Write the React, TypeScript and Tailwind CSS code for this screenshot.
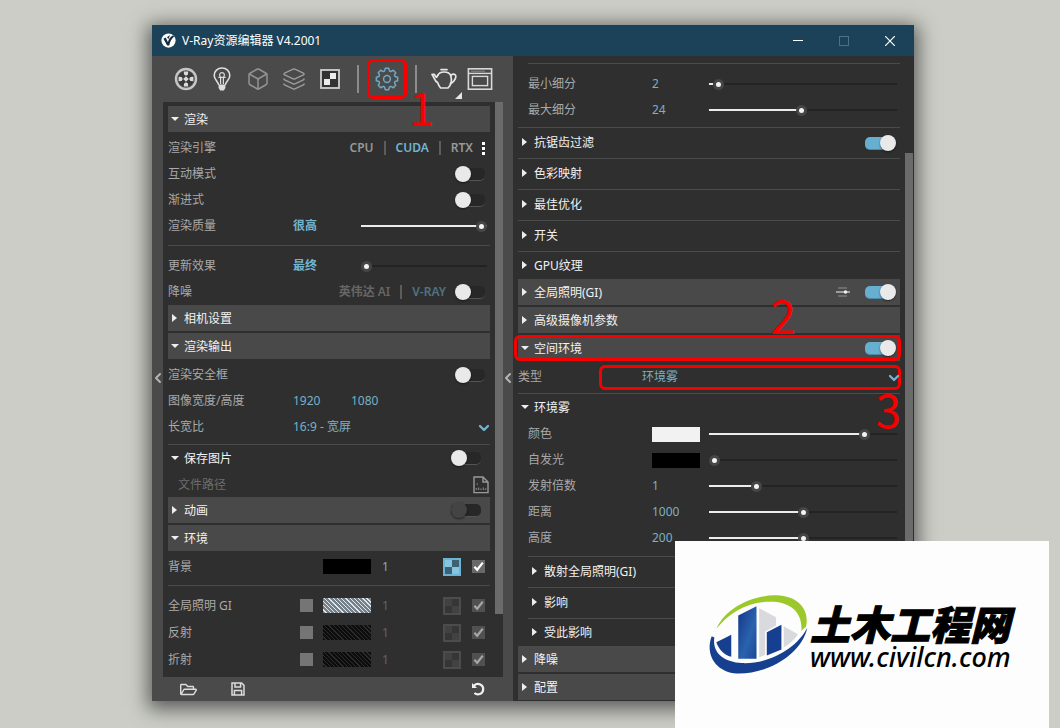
import React from 'react'
import { Box, ChevronDown, ChevronLeft, Layers } from 'lucide-react'
import { FaRegFolderOpen } from 'react-icons/fa'

/* ---------- icons ---------- */

const VrayLogo = () => (
  <svg viewBox="0 0 16 16" className="size-[15px]" aria-hidden="true">
    <circle cx="8" cy="8" r="7.6" fill="#fff" />
    <path d="M2.6 6 L5 4.8 L7.4 9.8 C8.2 6.4 10 3.8 13 2.4 L14 3.8 C11.2 6 9.8 9 8.8 13.2 L6.6 13.2 Z" fill="#14293a" />
    <path d="M6.4 4.4 L9.6 2 L8 6.4 Z" fill="#14293a" />
  </svg>
)

const MaterialIcon = () => (
  <svg viewBox="0 0 24 24" className="size-6" fill="none" aria-hidden="true">
    <circle cx="12" cy="12" r="10" stroke="#c6c6c6" strokeWidth="2.4" />
    <circle cx="12" cy="12" r="7.8" fill="#3a3a3a" />
    <path
      d="M12 9.2 L14.8 12 L12 14.8 L9.2 12 Z M9.8 4.6 H14.2 L14 7.6 L12 8.8 L10 7.6 Z M9.8 19.4 H14.2 L14 16.4 L12 15.2 L10 16.4 Z M4.6 9.8 V14.2 L7.6 14 L8.8 12 L7.6 10 Z M19.4 9.8 V14.2 L16.4 14 L15.2 12 L16.4 10 Z"
      fill="#dadada"
    />
  </svg>
)

const LightIcon = () => (
  <svg viewBox="0 0 24 24" className="size-6" fill="none" stroke="#dedede" strokeWidth="1.6" aria-hidden="true">
    <path d="M8.6 18 C8.6 14.5 4.2 13 4.2 8.4 C4.2 4 7.6 1 12 1 C16.4 1 19.8 4 19.8 8.4 C19.8 13 15.4 14.5 15.4 18" />
    <path d="M8.6 17.4 H15.4 V21 L13.8 23.4 H10.2 L8.6 21 Z" fill="#dedede" stroke="none" />
    <path d="M8.4 10.4 H15.6 M10.4 10 C8.8 7.6 9.8 5.6 12 5.6 C14.2 5.6 15.2 7.6 13.6 10 M10.6 10.4 V17 M13.4 10.4 V17" strokeWidth="1.2" />
  </svg>
)

const TextureIcon = () => (
  <svg viewBox="0 0 24 24" className="size-6" aria-hidden="true">
    <rect x="3" y="3" width="18" height="18" fill="#333" stroke="#cfcfcf" strokeWidth="1.8" />
    <path d="M12 6 H18 V12 H12 Z M6 12 H12 V18 H6 Z" fill="#ececec" />
  </svg>
)

const GEAR_TEETH = 8

const gearPath = () => {
  const step = (Math.PI * 2) / GEAR_TEETH
  const points: string[] = []
  for (let i = 0; i < GEAR_TEETH; i++) {
    const a = i * step - Math.PI / 2
    const corners = [
      [8.4, -0.3],
      [10.8, -0.16],
      [10.8, 0.16],
      [8.4, 0.3],
    ]
    corners.forEach(([r, d]) => {
      points.push(`${(12 + r * Math.cos(a + d)).toFixed(2)} ${(12 + r * Math.sin(a + d)).toFixed(2)}`)
    })
  }
  return `M${points.join(' L')} Z`
}

const GearIcon = () => (
  <svg viewBox="0 0 24 24" className="size-6" fill="none" stroke="#6fa8c4" strokeWidth="1.5" strokeLinejoin="round" aria-hidden="true">
    <path d={gearPath()} />
    <circle cx="12" cy="12" r="3.4" />
  </svg>
)

const TeapotIcon = () => (
  <svg viewBox="0 0 28 24" className="h-6 w-7" fill="none" stroke="#e6e6e6" strokeWidth="1.7" strokeLinejoin="round" strokeLinecap="round" aria-hidden="true">
    <path d="M11 2.6 H17" />
    <path d="M8 8 C9 5.8 11 5 14 5 C17 5 19.4 5.8 20.6 8" />
    <path d="M8 8 C6.6 9.6 7 11 6 10 L4.4 7.4 L2 7.4 C4 9.6 4.6 14.4 7.6 15.6 C8.4 18 9.4 19.6 10.6 21 H18 C20.6 18.6 22.4 14 20.6 8" />
    <path d="M20.8 8.4 C24.6 5.6 26.6 8.4 25.6 11 C24.8 13.4 22.8 15.4 20.4 16.6" />
  </svg>
)

const FrameIcon = () => (
  <svg viewBox="0 0 26 24" className="h-6 w-[26px]" fill="none" stroke="#d8d8d8" aria-hidden="true">
    <rect x="1.4" y="1.8" width="23.2" height="20.4" strokeWidth="1.6" />
    <path d="M2 6.4 H24" strokeWidth="1.4" />
    <path d="M4 4.2 H18" strokeWidth="1" stroke="#8c8c8c" />
    <rect x="5.4" y="9.4" width="15.2" height="9.2" strokeWidth="1.4" />
  </svg>
)

const FileIcon = () => (
  <svg viewBox="0 0 16 18" className="h-[18px] w-4" fill="none" stroke="#9a9a9a" strokeWidth="1.4" aria-hidden="true">
    <path d="M1 1 H10 L15 6 V16.6 H1 Z M10 1 V6 H15" />
    <path d="M3.4 14 V12 M5.6 14 V11.4 M8 14 V12.4 M10.4 14 V11.6 M12.6 14 V12.2 M3.6 8 H5" stroke="#777" />
  </svg>
)

const SaveIcon = () => (
  <svg viewBox="0 0 16 16" className="size-4" fill="none" stroke="#dcdcdc" strokeWidth="1.5" aria-hidden="true">
    <path d="M2 2 H11.6 L14 4.4 V14 H2 Z" />
    <path d="M5 2 V6 H10.6 V2 M4.4 14 V9.4 H11.6 V14" />
  </svg>
)

const ResetIcon = () => (
  <svg viewBox="0 0 16 16" className="size-4" fill="none" stroke="#f0f0f0" strokeWidth="2.2" aria-hidden="true">
    <path d="M4 4.6 C8 1 13.6 3.8 13.2 8.6 C12.8 13 7.6 14.8 4.4 12" />
    <path d="M2 2 V7 H7 Z" fill="#f0f0f0" stroke="none" />
  </svg>
)

const TuneIcon = () => (
  <svg viewBox="0 0 16 12" className="h-3 w-4" stroke="#8f8f8f" strokeWidth="1.2" aria-hidden="true">
    <path d="M3 2 H12 M3 10 H12" />
    <path d="M1 6 H15" stroke="#d8d8d8" />
    <circle cx="10.5" cy="6" r="1.8" fill="#f0f0f0" stroke="none" />
  </svg>
)

const Arrow = ({ open }: { open?: boolean }) => (
  <svg viewBox="0 0 12 12" className="h-3 w-3 shrink-0 overflow-visible" fill="#ededed" aria-hidden="true">
    {open ? <path d="M-1 3 H7 L3 7 Z" /> : <path d="M0 1 L5 5 L0 9 Z" />}
  </svg>
)

/* ---------- controls ---------- */

type ToggleProps = { id?: string; label: string; on?: boolean; dim?: boolean }

const Toggle: React.FC<ToggleProps> = ({ id, label, on, dim }) => (
  <input
    id={id}
    type="checkbox"
    aria-label={label}
    defaultChecked={on}
    disabled={dim}
    className="relative h-[13px] w-[30px] shrink-0 appearance-none rounded-[5px] border-b border-[#555] bg-[#272727] before:absolute before:-top-[2px] before:left-0 before:size-4 before:rounded-full before:bg-[#e9e9e9] before:shadow-[0_1px_2px_rgba(0,0,0,0.5)] checked:border-[#4c8aa5] checked:bg-[#66afd0] checked:before:left-[15px] disabled:before:bg-[#444]"
  />
)

const Slider = ({ id, label, value }: { id?: string; label: string; value: number }) => (
  <input
    id={id}
    type="range"
    aria-label={label}
    defaultValue={value}
    style={{ backgroundImage: `linear-gradient(to right, #ececec ${value}%, #232323 ${value}%)` }}
    className="mr-[3px] h-[2px] min-w-0 flex-1 appearance-none [&::-webkit-slider-thumb]:size-[11px] [&::-webkit-slider-thumb]:appearance-none [&::-webkit-slider-thumb]:rounded-full [&::-webkit-slider-thumb]:border-[3px] [&::-webkit-slider-thumb]:border-[#464646] [&::-webkit-slider-thumb]:bg-[#f4f4f4]"
  />
)

type SectionProps = { title: string; open?: boolean; children?: React.ReactNode }

const Bar: React.FC<SectionProps> = ({ title, open, children }) => (
  <div className="relative flex h-[26px] items-center bg-[#494949]">
    <button type="button" aria-expanded={!!open} className="flex flex-1 items-center pt-[2px] pl-1 text-left text-[#f2f2f2]">
      <Arrow open={open} />
      {title}
    </button>
    {children}
  </div>
)

const Line: React.FC<SectionProps & { short?: boolean }> = ({ title, open, short, children }) => (
  <div className={short ? 'flex h-[28px] items-center border-t border-[#4a4c4b]' : 'flex h-[31px] items-center border-t border-[#4a4c4b]'}>
    <button type="button" aria-expanded={!!open} className="flex flex-1 items-center pl-1 text-left text-[#f2f2f2]">
      <Arrow open={open} />
      {title}
    </button>
    {children}
  </div>
)

const Row = ({ id, label, children }: { id: string; label: string; children: React.ReactNode }) => (
  <div className="flex h-[26px] items-center">
    <label htmlFor={id} className="w-[125px] shrink-0">
      {label}
    </label>
    {children}
  </div>
)

const ParamRow = ({ id, label, value, color, slider }: { id: string; label: string; value?: string; color?: 'white' | 'black'; slider: number }) => (
  <div className="flex h-[26px] items-center pl-[10px]">
    <label htmlFor={id} className="w-[124px] shrink-0">
      {label}
    </label>
    <div className="flex w-[57px] shrink-0">
      {color ? (
        <button
          id={id}
          type="button"
          aria-label={label}
          className={color === 'white' ? 'h-[15px] w-12 bg-[#f2f2f2]' : 'h-[15px] w-12 bg-black'}
        />
      ) : (
        <input id={id} type="text" defaultValue={value} className="w-12 bg-transparent text-[#7ab0c6]" />
      )}
    </div>
    <Slider label={label + '滑块'} value={slider} />
  </div>
)

type EnvRowProps = { id: string; label: string; fill: 'black' | 'light' | 'dark'; active?: boolean }

const swatchFill = {
  black: 'h-[15px] w-12 shrink-0 bg-black',
  light: 'h-[15px] w-12 shrink-0 bg-[repeating-linear-gradient(45deg,#75818a_0px,#75818a_2px,#e2e6e8_2px,#e2e6e8_3px)]',
  dark: 'h-[15px] w-12 shrink-0 bg-[repeating-linear-gradient(45deg,#0d0d0d_0px,#0d0d0d_2px,#2c2c2c_2px,#2c2c2c_3px)]',
}

const EnvRow: React.FC<EnvRowProps> = ({ id, label, fill, active }) => (
  <div className="flex h-[27px] shrink-0 items-center">
    <label htmlFor={id} className="min-w-0 flex-1">
      {label}
    </label>
    {!active && <input type="checkbox" aria-label={label + '覆盖'} className="mr-[10px] size-[13px] shrink-0 appearance-none bg-[#757575]" />}
    <button type="button" aria-label={label + '颜色'} className={swatchFill[fill]} />
    <input
      id={id}
      type="text"
      defaultValue="1"
      className={active ? 'ml-[11px] w-[61px] bg-transparent text-[#7ab0c6]' : 'ml-[11px] w-[61px] bg-transparent text-[#5d6468]'}
    />
    <button type="button" aria-label={label + '贴图'} className="shrink-0">
      <svg viewBox="0 0 18 18" className="size-[18px]" aria-hidden="true">
        <rect width="18" height="18" fill={active ? '#6db3d2' : '#4c4c4c'} />
        <path d="M2 2 H9 V9 H2 Z M9 9 H16 V16 H9 Z" fill={active ? '#84c6e2' : '#424242'} />
        <path d="M9 2 H16 V9 H9 Z M2 9 H9 V16 H2 Z" fill={active ? '#3f6272' : '#363636'} />
      </svg>
    </button>
    <span className="relative mr-[5px] ml-[11px] flex size-[13px] shrink-0">
      <input
        type="checkbox"
        aria-label={label + '启用'}
        defaultChecked
        className={active ? 'size-[13px] appearance-none bg-[#696969]' : 'size-[13px] appearance-none bg-[#505050]'}
      />
      <svg viewBox="0 0 13 13" className="pointer-events-none absolute inset-0" fill="none" stroke={active ? '#fff' : '#a6a6a6'} strokeWidth="2.2" aria-hidden="true">
        <path d="M2.4 6.8 L5.2 9.8 L10.8 2.6" />
      </svg>
    </span>
  </div>
)

const Collapse = ({ label }: { label: string }) => (
  <button type="button" aria-label={label} className="flex items-center justify-center pb-6 text-[#b4b4b4]">
    <ChevronLeft className="size-4 shrink-0" strokeWidth={3} />
  </button>
)

const ToolButton = ({ label, children }: { label: string; children: React.ReactNode }) => (
  <button type="button" aria-label={label} className="relative flex h-10 w-9 shrink-0 items-center justify-center">
    {children}
  </button>
)

const Separator = () => <span className="h-[14px] w-[2px] bg-[#5c5c5c]" />

/* ---------- layout ---------- */

const TitleBar = () => (
  <header className="flex h-[31px] items-center bg-[#1b4259] pl-[9px] text-white">
    <VrayLogo />
    <h1 className="ml-[6px] flex-1">V-Ray资源编辑器 V4.2001</h1>
    <button type="button" aria-label="最小化" className="flex h-full w-[46px] items-center justify-center">
      <span className="h-px w-[10px] bg-white" />
    </button>
    <button type="button" aria-label="最大化" disabled className="flex h-full w-[45px] items-center justify-center">
      <span className="size-[10px] border border-[#4f7186]" />
    </button>
    <button type="button" aria-label="关闭" className="flex h-full w-12 items-center justify-center">
      <svg viewBox="0 0 10 10" className="size-[10px]" stroke="#fff" strokeWidth="1.2" aria-hidden="true">
        <path d="M0 0 L10 10 M10 0 L0 10" />
      </svg>
    </button>
  </header>
)

const Toolbar = () => (
  <nav className="flex h-[46px] shrink-0 items-center pl-4">
    <ToolButton label="材质">
      <MaterialIcon />
    </ToolButton>
    <ToolButton label="灯光">
      <LightIcon />
    </ToolButton>
    <ToolButton label="几何体">
      <Box className="size-6 text-[#939393]" strokeWidth={1.5} />
    </ToolButton>
    <ToolButton label="渲染元素">
      <Layers className="size-6 text-[#9b9b9b]" strokeWidth={1.5} />
    </ToolButton>
    <ToolButton label="纹理">
      <TextureIcon />
    </ToolButton>
    <span className="ml-[9px] h-7 w-[2px] bg-[#8c8c8c]" />
    <div className="relative mx-2 flex">
      <button type="button" aria-label="设置" className="flex size-10 items-center justify-center rounded-md border-[3px] border-[#f60000]">
        <GearIcon />
      </button>
      <span className="absolute top-6 left-[42px] z-10 font-['Noto_Sans_CJK_SC',sans-serif] text-[46px] leading-[46px] text-[#f60000]">1</span>
    </div>
    <span className="mr-[9px] h-7 w-[2px] bg-[#8c8c8c]" />
    <ToolButton label="渲染">
      <TeapotIcon />
      <svg viewBox="0 0 7 7" className="absolute right-0 bottom-0 size-[7px]" fill="#e6e6e6" aria-hidden="true">
        <path d="M7 0 V7 H0 Z" />
      </svg>
    </ToolButton>
    <ToolButton label="帧缓冲">
      <FrameIcon />
    </ToolButton>
  </nav>
)

const LeftSettings = () => (
  <div className="flex min-h-0 flex-1 overflow-hidden bg-[#2f2f2f] pt-1 pl-[5px]">
    <div className="flex min-w-0 flex-1 flex-col">
      <Bar title="渲染" open />
      <section className="pt-[3px]">
        <div className="flex h-[26px] items-center">
          <span className="flex-1">渲染引擎</span>
          <div className="flex items-center gap-[10px] font-semibold text-[#989898]">
            <button type="button">CPU</button>
            <Separator />
            <button type="button" className="text-[#72b5d0]">
              CUDA
            </button>
            <Separator />
            <button type="button">RTX</button>
          </div>
          <button type="button" aria-label="更多" className="mr-[5px] ml-[9px] flex flex-col gap-[2px]">
            <span className="size-[3px] bg-white" />
            <span className="size-[3px] bg-white" />
            <span className="size-[3px] bg-white" />
          </button>
        </div>
        <Row id="interactive" label="互动模式">
          <span className="flex-1" />
          <span className="mr-[5px] flex">
            <Toggle id="interactive" label="互动模式" />
          </span>
        </Row>
        <Row id="progressive" label="渐进式">
          <span className="flex-1" />
          <span className="mr-[5px] flex">
            <Toggle id="progressive" label="渐进式" />
          </span>
        </Row>
        <Row id="quality" label="渲染质量">
          <span className="w-[68px] shrink-0 font-bold text-[#72b5d0]">很高</span>
          <Slider id="quality" label="渲染质量" value={100} />
        </Row>
        <hr className="mt-[6px] mb-[7px] border-[#4a4a4a]" />
        <Row id="update" label="更新效果">
          <span className="w-[68px] shrink-0 font-bold text-[#72b5d0]">最终</span>
          <Slider id="update" label="更新效果" value={0} />
        </Row>
        <Row id="denoise" label="降噪">
          <div className="flex flex-1 items-center justify-end gap-[10px] font-semibold text-[#666]">
            <button type="button">英伟达 AI</button>
            <Separator />
            <button type="button" className="text-[#4f7382]">
              V-RAY
            </button>
          </div>
          <span className="mr-[5px] ml-[9px] flex">
            <Toggle id="denoise" label="降噪" />
          </span>
        </Row>
      </section>

      <div className="flex flex-col gap-[2px]">
        <Bar title="相机设置" />
        <Bar title="渲染输出" open />
      </div>
      <section className="pt-[3px]">
        <Row id="safe" label="渲染安全框">
          <span className="flex-1" />
          <span className="mr-[5px] flex">
            <Toggle id="safe" label="渲染安全框" />
          </span>
        </Row>
        <Row id="width" label="图像宽度/高度">
          <input id="width" type="text" defaultValue="1920" className="w-[58px] bg-transparent text-[#7ab0c6]" />
          <input type="text" aria-label="高度" defaultValue="1080" className="w-[58px] bg-transparent text-[#7ab0c6]" />
        </Row>
        <Row id="ratio" label="长宽比">
          <div className="relative flex flex-1">
            <select id="ratio" className="w-full appearance-none bg-transparent text-[#7ab0c6]">
              <option>16:9 - 宽屏</option>
            </select>
            <ChevronDown className="pointer-events-none absolute top-0.5 -right-0.5 size-4 text-[#72b5d0]" strokeWidth={3.5} />
          </div>
        </Row>
      </section>
      <div className="pt-1">
        <Line title="保存图片" open short>
          <span className="mr-[9px] flex">
            <Toggle label="保存图片" />
          </span>
        </Line>
      </div>
      <div className="flex h-[25px] items-center pl-[10px]">
        <span className="flex-1 text-[#6c6c6c]">文件路径</span>
        <button type="button" aria-label="选择文件" className="mr-px">
          <FileIcon />
        </button>
      </div>

      <div className="flex flex-col gap-[2px]">
        <Bar title="动画">
          <span className="mr-[9px] flex">
            <Toggle label="动画" dim />
          </span>
        </Bar>
        <Bar title="环境" open />
      </div>
      <section className="pt-[2px]">
        <EnvRow id="background" label="背景" fill="black" active />
        <hr className="mt-[5px] mb-[6px] border-[#4a4a4a]" />
        <EnvRow id="gi" label="全局照明 GI" fill="light" />
        <EnvRow id="reflect" label="反射" fill="dark" />
        <EnvRow id="refract" label="折射" fill="dark" />
      </section>
    </div>
    <div className="-mt-1 ml-[5px] w-2">
      <div className="h-[89%] bg-[#6b6b6b]" />
    </div>
  </div>
)

const RightSettings = () => (
  <div className="flex bg-[#2f2f2f] pr-px pl-[5px]">
    <div className="min-w-0 flex-1 pb-px">
      <section className="pt-[7px] pb-1">
        <hr className="mb-[7px] ml-[10px] border-[#4a4c4b]" />
        <ParamRow id="min" label="最小细分" value="2" slider={2} />
        <ParamRow id="max" label="最大细分" value="24" slider={49} />
      </section>
      <Line title="抗锯齿过滤">
        <span className="mr-[5px] flex">
          <Toggle label="抗锯齿过滤" on />
        </span>
      </Line>
      <Line title="色彩映射" />
      <Line title="最佳优化" />
      <Line title="开关" />
      <Line title="GPU纹理" short />
      <div className="flex flex-col gap-[2px]">
        <Bar title="全局照明(GI)">
          <button type="button" aria-label="全局照明选项" className="mr-[14px]">
            <TuneIcon />
          </button>
          <span className="mr-[5px] flex">
            <Toggle label="全局照明" on />
          </span>
        </Bar>
        <Bar title="高级摄像机参数" />
        <Bar title="空间环境" open>
          <span className="mr-[5px] flex">
            <Toggle label="空间环境" on />
          </span>
          <span className="pointer-events-none absolute inset-y-0 -right-px -left-1 rounded-md border-[3px] border-[#f60000]" />
          <span className="pointer-events-none absolute right-[104px] bottom-6 font-['Noto_Sans_CJK_SC',sans-serif] text-[46px] leading-[46px] text-[#f60000]">2</span>
        </Bar>
      </div>

      <div className="relative -mr-px flex h-8 items-center">
        <label htmlFor="type" className="w-[81px] shrink-0">
          类型
        </label>
        <div className="relative flex h-[25px] flex-1 items-center rounded-md border-[3px] border-[#f60000]">
          <select id="type" className="w-full appearance-none bg-transparent pl-10 text-[#7ab0c6]">
            <option>环境雾</option>
          </select>
          <ChevronDown className="pointer-events-none absolute top-0.5 -right-1 size-4 text-[#72b5d0]" strokeWidth={3.5} />
        </div>
        <span className="pointer-events-none absolute top-6 right-0 font-['Noto_Sans_CJK_SC',sans-serif] text-[46px] leading-[46px] text-[#f60000]">3</span>
      </div>

      <Line title="环境雾" open short />
      <section className="pb-[5px]">
        <ParamRow id="color" label="颜色" color="white" slider={85} />
        <ParamRow id="emission" label="自发光" color="black" slider={0} />
        <ParamRow id="multiplier" label="发射倍数" value="1" slider={24} />
        <ParamRow id="distance" label="距离" value="1000" slider={50} />
        <ParamRow id="height" label="高度" value="200" slider={50} />
      </section>
      <div className="pl-[10px]">
        <Line title="散射全局照明(GI)" />
        <Line title="影响" />
        <Line title="受此影响" short />
      </div>
      <div className="flex flex-col gap-[2px]">
        <Bar title="降噪" />
        <Bar title="配置" />
      </div>
    </div>
    <div className="ml-[5px] flex w-2 pt-[97px]">
      <div className="flex-1 bg-[#6b6b6b]" />
    </div>
  </div>
)

const SiteBadge = () => (
  <aside className="absolute right-[11px] bottom-0 flex h-[187px] w-[374px] items-center bg-[#fdfdfd] pl-8 text-black">
    <svg viewBox="110 170 310 250" className="h-[83px] w-[103px] shrink-0" role="img" aria-label="土木工程网">
      <defs>
        <linearGradient id="tower" x1="0" y1="0" x2="1" y2="1">
          <stop offset="0%" stopColor="#12358a" />
          <stop offset="60%" stopColor="#2a63ad" />
          <stop offset="100%" stopColor="#1b4597" />
        </linearGradient>
      </defs>
      <path d="M138 278 C165 215 250 175 320 177 C385 180 420 220 408 272 L394 284 C398 240 375 205 320 197 C240 190 180 225 138 278 Z" fill="#9bc929" />
      <path d="M124 300 C105 350 130 402 190 412 C280 420 395 360 412 274 C380 340 290 385 215 381 C160 378 125 350 132 304 Z" fill="#173f8f" />
      <path d="M138 318 L183 296 V362 C160 356 146 340 138 318 Z" fill="#173f8f" />
      <path d="M204 238 L259 210 V368 H204 Z" fill="url(#tower)" />
      <path d="M267 216 L318 243 V268 L285 286 V356 L267 364 Z" fill="#d9dadd" />
      <path d="M290 288 L334 266 V340 L290 358 Z" fill="#173f8f" />
      <path d="M341 270 L384 294 C374 310 358 324 341 334 Z" fill="#d9dadd" />
    </svg>
    <div className="flex flex-col pt-1 whitespace-nowrap">
      <strong className="font-['Noto_Sans_CJK_SC',sans-serif] text-[40px] leading-[40px] font-black italic [-webkit-text-stroke:1px_black]">土木工程网</strong>
      <a href="#" className="font-['Noto_Sans',sans-serif] text-[27px] leading-7 font-medium italic">
        www.civilcn.com
      </a>
    </div>
  </aside>
)

const App: React.FC = () => {
  return (
    <main className="relative min-h-screen bg-[#cbcdc6] pt-[25px] pr-[146px] pb-[27px] pl-[152px] font-['Noto_Sans','Noto_Sans_CJK_SC',sans-serif] text-[12px] leading-[18px] text-[#a9a9a9]">
      <div className="bg-[#4a4a4a] shadow-[0_4px_18px_4px_rgba(0,0,0,0.55)]">
        <TitleBar />
        <div className="grid grid-cols-[361fr_401fr]">
          <div className="flex min-w-0 flex-col">
            <Toolbar />
            <div className="grid h-0 min-h-0 grow grid-cols-[11px_1fr_10px] grid-rows-[minmax(0,1fr)]">
              <Collapse label="收起左侧" />
              <LeftSettings />
              <Collapse label="收起右侧" />
            </div>
            <footer className="flex h-6 shrink-0 items-center pr-[27px] pl-7">
              <button type="button" aria-label="打开">
                <FaRegFolderOpen className="size-[17px] text-[#dcdcdc]" />
              </button>
              <button type="button" aria-label="保存" className="ml-[33px]">
                <SaveIcon />
              </button>
              <span className="flex-1" />
              <button type="button" aria-label="重置">
                <ResetIcon />
              </button>
            </footer>
          </div>
          <RightSettings />
        </div>
      </div>
      <SiteBadge />
    </main>
  )
}

export default App
